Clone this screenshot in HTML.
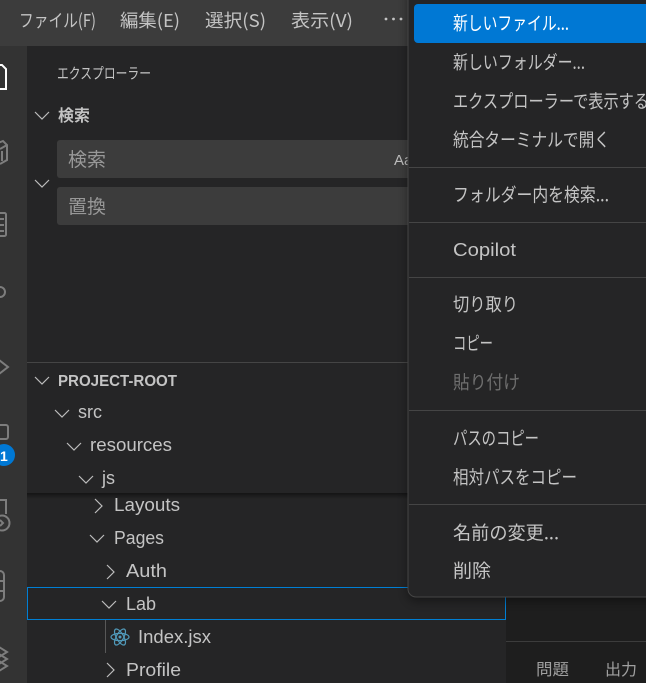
<!DOCTYPE html>
<html lang="ja"><head><meta charset="utf-8"><style>
html,body{margin:0;padding:0;background:#1e1e1e;width:646px;height:683px;overflow:hidden}
svg{display:block}
text{font-family:"Liberation Sans","Noto Sans CJK JP",sans-serif;fill:#c4c4c4;white-space:pre}
.j{font-family:"Noto Sans CJK JP","Liberation Sans",sans-serif}
.c{fill:none;stroke:#bdbdbd;stroke-width:1.200}
.a{fill:none;stroke:#7d7d7d;stroke-width:2}
</style></head><body>
<svg width="646" height="683" viewBox="0 0 646 683" xmlns="http://www.w3.org/2000/svg">
<defs><filter id="s" x="-10%" y="-10%" width="120%" height="120%"><feGaussianBlur stdDeviation="5"/></filter>
<linearGradient id="g" x1="0" y1="0" x2="0" y2="1"><stop offset="0" stop-color="#000" stop-opacity=".45"/><stop offset="1" stop-color="#000" stop-opacity="0"/></linearGradient></defs>
<rect width="646" height="683" fill="#1e1e1e"/>
<rect x="506" y="641" width="140" height="1" fill="#3c3c3c"/>
<rect width="646" height="46" fill="#3c3c3c"/>
<rect y="46" width="27" height="637" fill="#333"/>
<rect x="27" y="46" width="479" height="637" fill="#252526"/>

<text class="j" x="19" y="27" font-size="18" textLength="77" lengthAdjust="spacingAndGlyphs">ファイル(F)</text>
<text class="j" x="120" y="27" font-size="18" textLength="60" lengthAdjust="spacingAndGlyphs">編集(E)</text>
<text class="j" x="205" y="27" font-size="18" textLength="61" lengthAdjust="spacingAndGlyphs">選択(S)</text>
<text class="j" x="291" y="27" font-size="18" textLength="62" lengthAdjust="spacingAndGlyphs">表示(V)</text>
<g fill="#c4c4c4"><circle cx="386" cy="19" r="1.400"/><circle cx="393.500" cy="19" r="1.400"/><circle cx="401" cy="19" r="1.400"/></g>

<path d="M-2 65H2L6 69V89H-2Z" fill="none" stroke="#fff" stroke-width="2"/>
<path d="M-2 143L3 141L7 145V160L0 164M0 149L7 145M2 151V161" class="a"/>
<rect x="-6" y="213" width="12" height="23" rx="1.500" class="a"/>
<path d="M0 219H4M0 225H4M0 231H4" class="a" stroke-width="1.500"/>
<circle cx="0" cy="292" r="5" class="a"/>
<path d="M-1 360L8 367L-1 374" class="a"/>
<rect x="-6" y="425" width="14" height="14" rx="2" class="a"/>
<circle cx="4" cy="455" r="11" fill="#0078d4"/>
<text x="0" y="461" font-size="14" font-weight="700" style="fill:#fff">1</text>
<path d="M-2 500H6V514" class="a"/>
<circle cx="2" cy="523" r="7.500" class="a"/>
<path d="M0 520L3 523L0 526" class="a" stroke-width="1.500"/>
<rect x="-8" y="571" width="12" height="30" rx="4" class="a"/>
<path d="M-2 581H4M-2 591H4" class="a" stroke-width="1.500"/>
<path d="M-1 647L7 652L-1 657M-1 654L7 659L-1 664M-1 661L7 666L-1 671" class="a" stroke-width="1.800"/>

<text class="j" x="57" y="78.500" font-size="15" textLength="94" lengthAdjust="spacingAndGlyphs">エクスプローラー</text>
<path d="M35 112L42 119L49 112" class="c"/>
<text class="j" x="58" y="121" font-size="16" font-weight="700" textLength="32" lengthAdjust="spacingAndGlyphs">検索</text>
<path d="M35 180L42 187L49 180" class="c"/>
<rect x="57" y="140" width="360" height="38" rx="3" fill="#3c3c3c"/>
<rect x="57" y="187" width="360" height="38" rx="3" fill="#3c3c3c"/>
<text class="j" x="68" y="166" font-size="19" textLength="38" lengthAdjust="spacingAndGlyphs" style="fill:#989898">検索</text>
<text class="j" x="68" y="213" font-size="19" textLength="38" lengthAdjust="spacingAndGlyphs" style="fill:#989898">置換</text>
<text x="394" y="165" font-size="15" style="fill:#bdbdbd">Aa</text>

<rect x="27" y="362" width="381" height="1" fill="#454545"/>
<path d="M35 377L42 384L49 377" class="c"/>
<text x="58" y="386" font-size="15.500" font-weight="700" textLength="119" lengthAdjust="spacingAndGlyphs">PROJECT-ROOT</text>
<path d="M55 410L62 417L69 410" class="c"/>
<text x="78" y="418" font-size="18">src</text>
<path d="M67 443L74 450L81 443" class="c"/>
<text x="90" y="451" font-size="18" textLength="82" lengthAdjust="spacingAndGlyphs">resources</text>
<path d="M79 476L86 483L93 476" class="c"/>
<text x="102" y="484" font-size="18">js</text>
<rect x="27" y="493" width="381" height="6" fill="url(#g)"/>
<path d="M95 499L102 506L95 513" class="c"/>
<text x="114" y="511" font-size="18" textLength="66" lengthAdjust="spacingAndGlyphs">Layouts</text>
<path d="M90 535L97 542L104 535" class="c"/>
<text x="114" y="544" font-size="18" textLength="50" lengthAdjust="spacingAndGlyphs">Pages</text>
<path d="M107 565L114 572L107 579" class="c"/>
<text x="126" y="577" font-size="18" textLength="41" lengthAdjust="spacingAndGlyphs">Auth</text>
<rect x="27.500" y="587.500" width="478" height="32" fill="#252526" stroke="#007fd4"/>
<path d="M102 601L109 608L116 601" class="c"/>
<text x="126" y="610" font-size="18">Lab</text>
<rect x="105" y="620" width="1" height="33" fill="#585858"/>
<g fill="none" stroke="#519aba" stroke-width="1.200"><ellipse cx="120" cy="637" rx="9" ry="3.600"/><ellipse cx="120" cy="637" rx="9" ry="3.600" transform="rotate(60 120 637)"/><ellipse cx="120" cy="637" rx="9" ry="3.600" transform="rotate(120 120 637)"/></g>
<circle cx="120" cy="637" r="1.500" fill="#519aba"/>
<text x="138" y="643" font-size="18" textLength="73" lengthAdjust="spacingAndGlyphs">Index.jsx</text>
<path d="M107 663L114 670L107 677" class="c"/>
<text x="126" y="676" font-size="18" textLength="55" lengthAdjust="spacingAndGlyphs">Profile</text>

<text class="j" x="536" y="675" font-size="16" textLength="33" lengthAdjust="spacingAndGlyphs" style="fill:#a0a0a0">問題</text>
<text class="j" x="605" y="675" font-size="16" textLength="32" lengthAdjust="spacingAndGlyphs" style="fill:#a0a0a0">出力</text>

<rect x="408" y="-10" width="260" height="611" rx="8" fill="#000" opacity=".4" filter="url(#s)"/>
<rect x="408" y="-10" width="260" height="607" rx="8" fill="#252526" stroke="#454545"/>
<rect x="414" y="4" width="240" height="39" rx="4" fill="#0078d4"/>
<g font-size="18.500">
<text class="j" x="453" y="30" textLength="116" lengthAdjust="spacingAndGlyphs" style="fill:#fff">新しいファイル...</text>
<text class="j" x="453" y="69" textLength="132" lengthAdjust="spacingAndGlyphs">新しいフォルダー...</text>
<text class="j" x="453" y="108" textLength="196" lengthAdjust="spacingAndGlyphs">エクスプローラーで表示する</text>
<text class="j" x="453" y="146.500" textLength="157" lengthAdjust="spacingAndGlyphs">統合ターミナルで開く</text>
<rect x="409" y="167" width="237" height="1" fill="#454545"/>
<text class="j" x="453" y="201.500" textLength="156" lengthAdjust="spacingAndGlyphs">フォルダー内を検索...</text>
<rect x="409" y="222" width="237" height="1" fill="#454545"/>
<text x="453" y="256" font-size="18" textLength="63" lengthAdjust="spacingAndGlyphs">Copilot</text>
<rect x="409" y="277" width="237" height="1" fill="#454545"/>
<text class="j" x="453" y="311" textLength="65" lengthAdjust="spacingAndGlyphs">切り取り</text>
<text class="j" x="453" y="350" textLength="40" lengthAdjust="spacingAndGlyphs">コピー</text>
<text class="j" x="453" y="389" textLength="67" lengthAdjust="spacingAndGlyphs" style="fill:#6f6f6f">貼り付け</text>
<rect x="409" y="410" width="237" height="1" fill="#454545"/>
<text class="j" x="453" y="445" textLength="86" lengthAdjust="spacingAndGlyphs">パスのコピー</text>
<text class="j" x="453" y="484" textLength="124" lengthAdjust="spacingAndGlyphs">相対パスをコピー</text>
<rect x="409" y="504" width="237" height="1" fill="#454545"/>
<text class="j" x="453" y="539.500" textLength="106" lengthAdjust="spacingAndGlyphs">名前の変更...</text>
<text class="j" x="453" y="577.500" textLength="38" lengthAdjust="spacingAndGlyphs">削除</text>
</g>
</svg>
</body></html>
